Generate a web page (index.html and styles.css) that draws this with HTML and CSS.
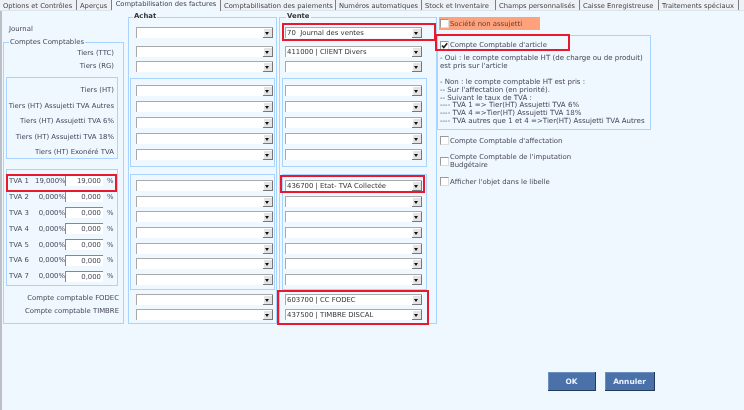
FILE: index.html
```html
<!DOCTYPE html>
<html lang="fr">
<head>
<meta charset="utf-8">
<title>Comptabilisation des factures</title>
<link rel="stylesheet" href="styles.css">
</head>
<body>
<div class="page">
  <nav class="tabs">
    <span class="tab t1">Options et Contrôles</span>
    <span class="tab t2">Aperçus</span>
    <span class="tab t3 active">Comptabilisation des factures</span>
    <span class="tab t4">Comptabilisation des paiements</span>
    <span class="tab t5">Numéros automatiques</span>
    <span class="tab t6">Stock et Inventaire</span>
    <span class="tab t7">Champs personnalisés</span>
    <span class="tab t8">Caisse Enregistreuse</span>
    <span class="tab t9">Traitements spéciaux</span>
  </nav>
  <main class="form">
    <section class="labels">
      <div class="journal">Journal</div>
      <div class="group comptes">
        <span class="legend">Comptes Comptables</span>
        <div class="lbl tall">Tiers (TTC)</div>
        <div class="lbl tall">Tiers (RG)</div>
        <div class="subbox tiers">
          <div class="lbl">Tiers (HT)</div>
          <div class="lbl">Tiers (HT) Assujetti TVA Autres</div>
          <div class="lbl">Tiers (HT) Assujetti TVA 6%</div>
          <div class="lbl">Tiers (HT) Assujetti TVA 18%</div>
          <div class="lbl">Tiers (HT) Exonéré TVA</div>
        </div>
        <div class="subbox taux">
          <div class="tva"><span class="tn">TVA 1</span><span class="tp">19,000%</span><span class="ti">19,000</span><span class="tu">%</span></div>
          <div class="tva"><span class="tn">TVA 2</span><span class="tp">0,000%</span><span class="ti">0,000</span><span class="tu">%</span></div>
          <div class="tva"><span class="tn">TVA 3</span><span class="tp">0,000%</span><span class="ti">0,000</span><span class="tu">%</span></div>
          <div class="tva"><span class="tn">TVA 4</span><span class="tp">0,000%</span><span class="ti">0,000</span><span class="tu">%</span></div>
          <div class="tva"><span class="tn">TVA 5</span><span class="tp">0,000%</span><span class="ti">0,000</span><span class="tu">%</span></div>
          <div class="tva"><span class="tn">TVA 6</span><span class="tp">0,000%</span><span class="ti">0,000</span><span class="tu">%</span></div>
          <div class="tva"><span class="tn">TVA 7</span><span class="tp">0,000%</span><span class="ti">0,000</span><span class="tu">%</span></div>
        </div>
        <div class="lbl tall far first">Compte comptable FODEC</div>
        <div class="lbl tall far">Compte comptable TIMBRE</div>
      </div>
    </section>

    <section class="group acct achat">
      <span class="legend strong">Achat</span>
      <div class="combo j"><span class="val"></span><i class="arrow"></i></div>
      <div class="combo t"><span class="val"></span><i class="arrow"></i></div>
      <div class="combo"><span class="val"></span><i class="arrow"></i></div>
      <div class="subbox list one">
        <div class="combo"><span class="val"></span><i class="arrow"></i></div>
        <div class="combo"><span class="val"></span><i class="arrow"></i></div>
        <div class="combo"><span class="val"></span><i class="arrow"></i></div>
        <div class="combo"><span class="val"></span><i class="arrow"></i></div>
        <div class="combo"><span class="val"></span><i class="arrow"></i></div>
      </div>
      <div class="subbox list two">
        <div class="combo"><span class="val"></span><i class="arrow"></i></div>
        <div class="combo"><span class="val"></span><i class="arrow"></i></div>
        <div class="combo"><span class="val"></span><i class="arrow"></i></div>
        <div class="combo"><span class="val"></span><i class="arrow"></i></div>
        <div class="combo"><span class="val"></span><i class="arrow"></i></div>
        <div class="combo"><span class="val"></span><i class="arrow"></i></div>
        <div class="combo"><span class="val"></span><i class="arrow"></i></div>
      </div>
      <div class="combo f"><span class="val"></span><i class="arrow"></i></div>
      <div class="combo t2c"><span class="val"></span><i class="arrow"></i></div>
    </section>

    <section class="group acct vente">
      <span class="legend strong">Vente</span>
      <div class="combo j"><span class="val">70&nbsp; Journal des ventes</span><i class="arrow"></i></div>
      <div class="combo t"><span class="val">411000 | CllENT Divers</span><i class="arrow"></i></div>
      <div class="combo"><span class="val"></span><i class="arrow"></i></div>
      <div class="subbox list one">
        <div class="combo"><span class="val"></span><i class="arrow"></i></div>
        <div class="combo"><span class="val"></span><i class="arrow"></i></div>
        <div class="combo"><span class="val"></span><i class="arrow"></i></div>
        <div class="combo"><span class="val"></span><i class="arrow"></i></div>
        <div class="combo"><span class="val"></span><i class="arrow"></i></div>
      </div>
      <div class="subbox list two">
        <div class="combo"><span class="val">436700 | Etat- TVA Collectée</span><i class="arrow"></i></div>
        <div class="combo"><span class="val"></span><i class="arrow"></i></div>
        <div class="combo"><span class="val"></span><i class="arrow"></i></div>
        <div class="combo"><span class="val"></span><i class="arrow"></i></div>
        <div class="combo"><span class="val"></span><i class="arrow"></i></div>
        <div class="combo"><span class="val"></span><i class="arrow"></i></div>
        <div class="combo"><span class="val"></span><i class="arrow"></i></div>
      </div>
      <div class="combo f"><span class="val">603700 | CC FODEC</span><i class="arrow"></i></div>
      <div class="combo t2c"><span class="val">437500 | TIMBRE DISCAL</span><i class="arrow"></i></div>
    </section>

    <section class="options">
      <label class="check orange"><i class="box"></i>Société non assujetti</label>
      <div class="article">
        <label class="check"><i class="box on"><svg viewBox="0 0 9 9" width="9" height="9"><path d="M2 4.5 L3.8 6.6 L7.2 2.2" fill="none" stroke="#222" stroke-width="1.6"/></svg></i>Compte Comptable d'article</label>
        <p class="note">- Oui : le compte comptable HT (de charge ou de produit)<br>est pris sur l'article<br><br>- Non : le compte comptable HT est pris :<br>-- Sur l'affectation (en priorité).<br>-- Suivant le taux de TVA :<br>---- TVA 1 =&gt; Tier(HT) Assujetti TVA 6%<br>---- TVA 4 =&gt;Tier(HT) Assujetti TVA 18%<br>---- TVA autres que 1 et 4 =&gt;Tier(HT) Assujetti TVA Autres</p>
      </div>
      <label class="check c1"><i class="box"></i>Compte Comptable d'affectation</label>
      <label class="check c2"><i class="box"></i><span>Compte Comptable de l'imputation<br>Budgétaire</span></label>
      <label class="check c3"><i class="box"></i>Afficher l'objet dans le libelle</label>
    </section>
  </main>
  <footer class="actions">
    <button class="btn ok">OK</button>
    <button class="btn cancel">Annuler</button>
  </footer>
  <div class="mark m1"></div>
  <div class="mark m2"></div>
  <div class="mark m3"></div>
  <div class="mark m4"></div>
  <div class="mark m5"></div>
</div>
</body>
</html>
```
FILE: styles.css
```css
* { box-sizing: border-box; }
html, body { margin: 0; padding: 0; height: 100%; overflow: hidden; background: #eff7ff; }
.page {
  position: relative; display: flex; flex-direction: column; width: 744px; height: 410px; overflow: hidden;
  font-family: "DejaVu Sans", sans-serif; font-size: 6.9px; color: #47475a;
  background: #eff7ff; filter: blur(.45px);
}
.tabs { display: flex; flex: none; height: 11px; background: #eef2f6; border-bottom: 1px solid #dde5ec; padding-left: 3px; font-size: 6.75px; }
.tab { display: block; white-space: nowrap; line-height: 10px; border-right: 1px solid #7d7d7d; height: 10px; padding-top: 1px; color: #444; }
.tab.active { background: #eff7ff; height: 11px; padding-top: 0; line-height: 8px; text-align: center; }
.t1 { width: 74px; } .t2 { width: 35px; padding-left: 3px; } .t3 { width: 109px; }
.t4 { width: 115px; padding-left: 3px; } .t5 { width: 86px; padding-left: 3px; } .t6 { width: 74px; padding-left: 3px; }
.t7 { width: 84px; padding-left: 3px; } .t8 { width: 79px; padding-left: 3px; } .t9 { width: 80px; padding-left: 3px; }

.form { display: grid; flex: none; grid-template-columns: 121px 149px 156px 1fr; column-gap: 4px; height: 313px; padding: 6px 0 0 1px; border-left: 2px solid #bcc0c6; }
.group { position: relative; border: 1px solid #a8d4ff; }
.legend { position: absolute; left: 5px; top: -4px; line-height: 7px; padding: 0 1px; background: #eff7ff; white-space: nowrap; }
.legend.strong { top: -5px; font-weight: bold; color: #333; left: 4px; }
.vente .legend.strong { left: 6px; }
.subbox { border: 1px solid #a8d4ff; }

.labels { display: flex; flex-direction: column; }
.journal { height: 10px; margin: 7px 0 8px 6px; line-height: 10px; }
.comptes { flex: 1; padding-top: 4px; }
.lbl { height: 15.5px; line-height: 15.5px; text-align: right; white-space: nowrap; padding-right: 3px; }
.lbl.tall { height: 13px; line-height: 13px; padding-right: 9px; }
.lbl.far { padding-right: 4px; }
.lbl.first { margin-top: 6px; }
.tiers { width: 112px; margin: 4px 0 0 2px; height: 82px; padding-top: 5px; }
.taux { width: 112px; margin: 10px 0 0 2px; height: 117px; padding: 3px 0 0 2px; }
.tva { display: flex; align-items: center; height: 15.9px; }
.tn { width: 26px; }
.tp { width: 30px; text-align: right; padding-right: 0; }
.ti { width: 38px; height: 11px; line-height: 10px; background: #fff; text-align: right; padding-right: 2px; border-top: 1px solid #888; border-left: 1px solid #888; }
.tu { margin-left: 4px; }

.acct { padding-top: 9px; }
.achat { --combo-left: 7px; --box-left: 1px; --box-pad: 5px; }
.vente { --combo-left: 5px; --box-left: 2px; --box-pad: 2px; margin-left: -2px; }
.combo { display: flex; width: 137px; height: 11px; margin-left: var(--combo-left); background: #fff; border: 1px solid #a9a9a9; border-width: 1px 0 0 1px; }
.val { flex: 1; line-height: 10px; padding-left: 1px; white-space: nowrap; overflow: hidden; color: #333; }
.arrow { position: relative; width: 10px; background: #e4e4e4; border: 1px solid #777; border-width: 0 1px 1px 0; box-shadow: inset 1px 1px 0 #fff; }
.arrow::after { content: ""; position: absolute; left: 2px; top: 4px; border: 2.5px solid transparent; border-top: 3px solid #111; border-bottom: 0; }
.combo.t { margin-top: 8px; }
.combo.t + .combo { margin-top: 4px; }
.list { width: 145px; margin-left: var(--box-left); display: flex; flex-direction: column; }
.list .combo { margin-left: 0; }
.one { margin-top: 6px; height: 89px; padding: 6px 0 0 var(--box-pad); row-gap: 5px; }
.two { margin-top: 7px; height: 116px; padding: 5px 0 0 var(--box-pad); row-gap: 4.67px; }
.combo.f { margin-top: 4px; }
.combo.t2c { margin-top: 4px; }

.options { display: flex; flex-direction: column; margin-left: -4px; width: 220px; }
.check { display: flex; align-items: center; }
.box { display: block; flex: none; width: 9px; height: 9px; margin-right: 1px; background: #fff; border: 1px solid #9a9a9a; border-right-color: #ddd; border-bottom-color: #ddd; }
.box svg { display: block; margin: -1px; }
.orange { width: 101px; height: 13px; margin-left: 2px; padding-left: 1px; background: #ffa27c; color: #5a4038; }
.article { width: 214px; height: 95px; margin-top: 5px; border: 1px solid #a8d4ff; padding: 4px 0 0 2px; }
.article .check { height: 10px; }
.note { margin: 4px 0 0; line-height: 7.9px; font-size: 7.05px; white-space: nowrap; }
.c1 { margin: 6px 0 0 3px; }
.c2 { margin: 8px 0 0 3px; line-height: 8px; }
.c3 { margin: 8px 0 0 3px; }

.actions { display: flex; flex: 1; justify-content: flex-end; align-items: flex-start; column-gap: 9px; padding: 48px 89px 0 0; border-left: 2px solid #bcc0c6; }
.btn { height: 19px; border: 0; padding: 0; background: #4a72a8; color: #eaf2ff; font: bold 7.4px "DejaVu Sans", sans-serif; border-right: 1px solid #243a5c; border-bottom: 1px solid #243a5c; box-shadow: inset 1px 1px 0 #6d8fc0; }
.ok { width: 48px; } .cancel { width: 50px; }

.mark { position: absolute; border: 2px solid #e8192c; pointer-events: none; }
.m1 { left: 282px; top: 23px; width: 154px; height: 18px; }
.m2 { left: 435px; top: 34px; width: 135px; height: 17px; }
.m3 { left: 6px; top: 174px; width: 111px; height: 18px; }
.m4 { left: 280px; top: 175px; width: 145px; height: 18px; }
.m5 { left: 277px; top: 290px; width: 152px; height: 35px; }
```
